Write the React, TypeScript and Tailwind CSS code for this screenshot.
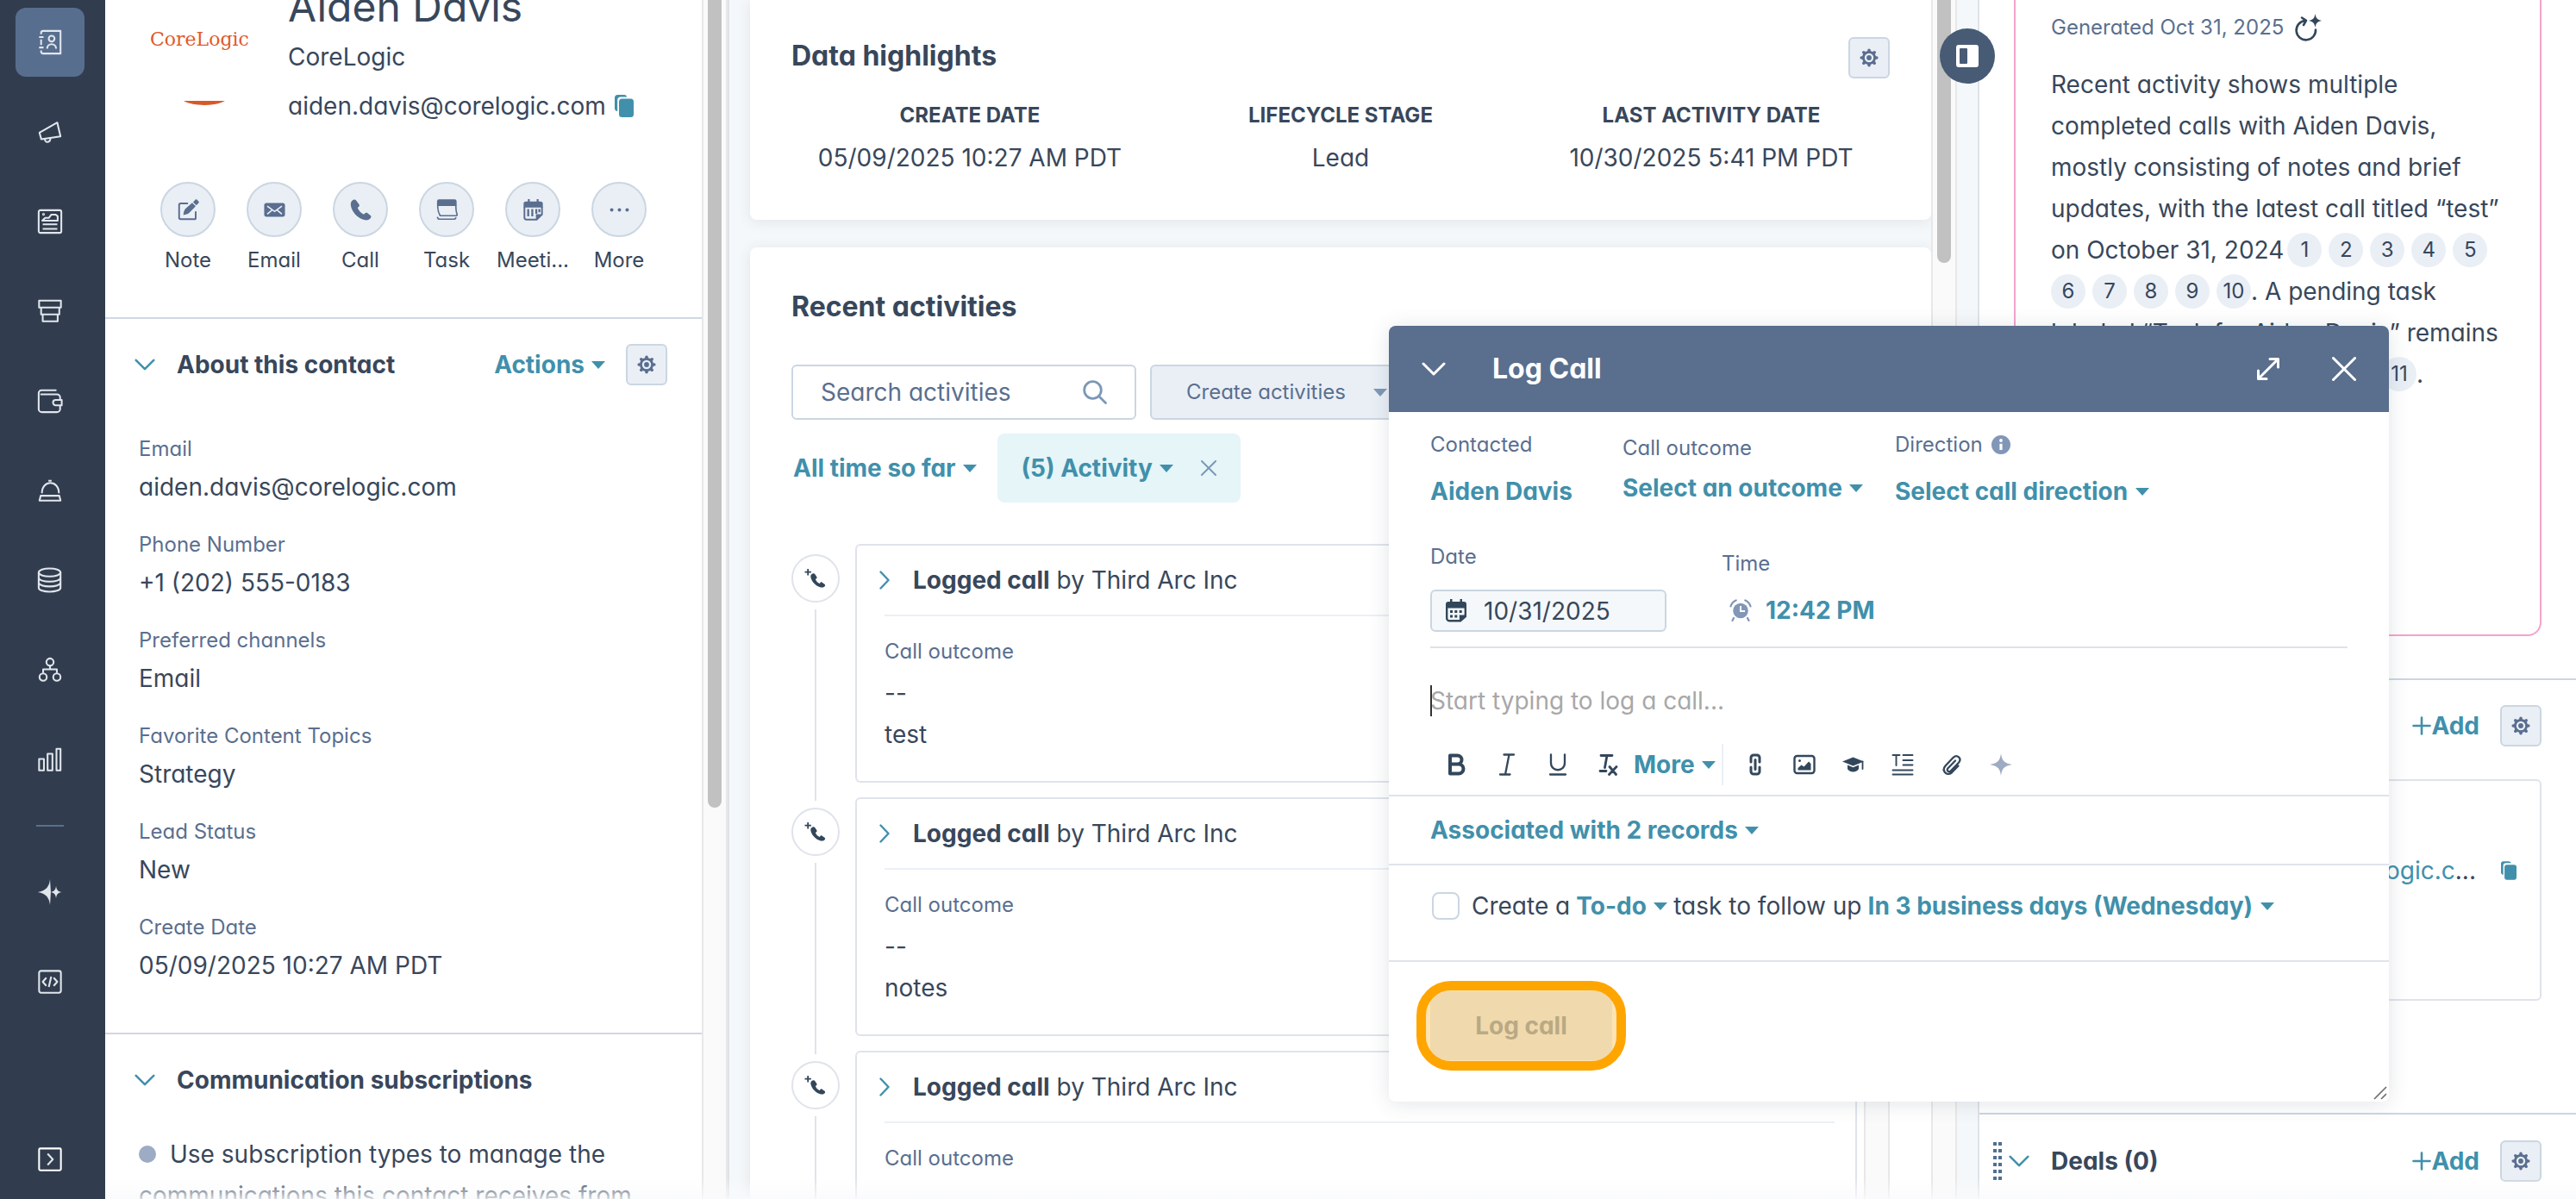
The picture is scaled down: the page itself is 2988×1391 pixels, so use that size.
import { useState, type ReactNode } from 'react';
import clsx from 'clsx';

interface IconProps {
  className?: string;
}

/* ---------- small shared icons ---------- */

function Caret({ className }: IconProps) {
  return (
    <svg viewBox="0 0 16 9" className={clsx('h-[9px] w-4 shrink-0', className)} fill="currentColor" aria-hidden="true">
      <path d="M0 0h16L8 9z" />
    </svg>
  );
}

function ChevronDown({ className }: IconProps) {
  return (
    <svg viewBox="0 0 28 16" className={clsx('shrink-0', className)} fill="none" stroke="currentColor" strokeWidth="3" strokeLinecap="round" strokeLinejoin="round" aria-hidden="true">
      <path d="M2 2l12 12L26 2" />
    </svg>
  );
}

function ChevronRight({ className }: IconProps) {
  return (
    <svg viewBox="0 0 12 22" className={clsx('shrink-0', className)} fill="none" stroke="currentColor" strokeWidth="2.4" strokeLinecap="round" strokeLinejoin="round" aria-hidden="true">
      <path d="M1.5 1.5L10.5 11l-9 9.5" />
    </svg>
  );
}

function Cross({ className }: IconProps) {
  return (
    <svg viewBox="0 0 28 28" className={clsx('shrink-0', className)} fill="none" stroke="currentColor" strokeWidth="3" strokeLinecap="round" aria-hidden="true">
      <path d="M1.5 1.5l25 25M26.5 1.5l-25 25" />
    </svg>
  );
}

function Copy({ className }: IconProps) {
  return (
    <svg viewBox="0 0 22 26" className={clsx('shrink-0', className)} fill="currentColor" aria-hidden="true">
      <path d="M0 3.5A3.5 3.5 0 013.500 0H11a3.500 3.500 0 013.300 2.400H7A3.800 3.800 0 003.200 6.200V19A3.500 3.500 0 010 16z" />
      <rect x="5" y="4.600" width="17" height="21.400" rx="3.500" />
    </svg>
  );
}

function Gear({ className }: IconProps) {
  return (
    <svg viewBox="0 0 22 22" className={clsx('h-[22px] w-[22px]', className)} fill="none" stroke="currentColor" aria-hidden="true">
      <circle cx="11" cy="11" r="6.600" strokeWidth="2.800" />
      <circle cx="11" cy="11" r="2.900" fill="currentColor" stroke="none" />
      <g strokeWidth="3.600" strokeLinecap="round">
        <path d="M11 2.200v1.400M11 18.400v1.400M2.200 11h1.400M18.400 11h1.400M4.800 4.800l.9.9M16.300 16.300l.9.9M4.800 17.200l.9-.9M16.300 5.700l.9-.9" />
      </g>
    </svg>
  );
}

function GearButton({ label }: { label: string }) {
  return (
    <button
      type="button"
      aria-label={label}
      className="flex h-12 w-12 shrink-0 items-center justify-center rounded-md border-2 border-[#cbd6e2] bg-[#eaeff6] text-[#5a6e8f]"
    >
      <Gear />
    </button>
  );
}

/* Native select that is as wide as its current text, with our own caret */
function InlineSelect({ id, label, value }: { id: string; label?: string; value: string }) {
  return (
    <span className="inline-flex items-center gap-2 font-bold text-[#4190ab]">
      <select id={id} aria-label={label} className="appearance-none bg-transparent text-[28px] leading-[48px] font-bold outline-none">
        <option>{value}</option>
      </select>
      <Caret />
    </span>
  );
}

function MenuButton({ children, className }: { children: ReactNode; className?: string }) {
  return (
    <button type="button" aria-haspopup="menu" className={clsx('flex items-center gap-2 font-bold whitespace-nowrap text-[#4190ab]', className)}>
      {children}
      <Caret />
    </button>
  );
}

function ScrollTrack({ children }: { children?: ReactNode }) {
  return <div className="flex w-[30px] shrink-0 justify-center border-x-2 border-[#e8e8e8] bg-[#fafafa]">{children}</div>;
}

/* ---------- navigation rail ---------- */

const NAV_ICONS: { label: string; icon: ReactNode }[] = [
  {
    label: 'Contacts',
    icon: (
      <>
        <path d="M5 6V4.500A2.500 2.500 0 017 2h22v28H7a2.500 2.500 0 01-2-2.500V26M5 12.500v7M2.500 9.500h5.500M2.500 22.500h5.500" />
        <circle cx="18" cy="11.500" r="3.600" />
        <path d="M12.500 24c0-7.500 11-7.500 11 0" />
      </>
    ),
  },
  {
    label: 'Marketing',
    icon: (
      <>
        <path d="M25 4.500L3 17l2.200 8L29 21.500z" />
        <path d="M9.500 24.500c0 5.500 7 5.500 7-1" />
      </>
    ),
  },
  {
    label: 'Content',
    icon: (
      <>
        <rect x="2" y="2" width="28" height="28" rx="2" />
        <path d="M7 19.500h18M7 25h18M6.500 15h19v-5.500l-2.500-2h-5.500l-3 4H10z" />
        <circle cx="8" cy="7" r=".6" />
      </>
    ),
  },
  {
    label: 'Commerce',
    icon: <path d="M2.500 3h27v8.500h-27zM5 11.500h22.500v8.500H5zM7 20h18.500v8.500H7z" />,
  },
  {
    label: 'Wallet',
    icon: (
      <>
        <path d="M24 3H5.500A3.500 3.500 0 002 6.500V26a4 4 0 004 4h18.500a4 4 0 004-4v-4.500M28.500 15v-3a4 4 0 00-4-4H4" />
        <path d="M23 15h7.500v6.500H23a3.200 3.200 0 010-6.500z" />
      </>
    ),
  },
  {
    label: 'Service',
    icon: (
      <>
        <path d="M6 19.500C6 2.500 27 2.500 27 19.500" />
        <path d="M4.500 22.500h23l1.500 6H3zM14 4h4" />
      </>
    ),
  },
  {
    label: 'Data',
    icon: (
      <>
        <ellipse cx="15.500" cy="6.500" rx="13.500" ry="5" />
        <path d="M2 6.500v19c0 6.500 27 6.500 27 0v-19M2 13c0 6.500 27 6.500 27 0M2 19c0 6.500 27 6.500 27 0" />
      </>
    ),
  },
  {
    label: 'Workflows',
    icon: (
      <>
        <circle cx="16" cy="6.500" r="4.500" />
        <circle cx="7.500" cy="25" r="4.500" />
        <circle cx="24.500" cy="25" r="4.500" />
        <path d="M16 11v4.500M7.500 20v-4.500h17V20" />
      </>
    ),
  },
  {
    label: 'Reporting',
    icon: <path d="M2.500 15.500h6v14h-6zM13 9h6v20.500h-6zM24 3h5v26.500h-5z" />,
  },
];

function NavButton({ label, active, children }: { label: string; active?: boolean; children: ReactNode }) {
  return (
    <button
      type="button"
      aria-label={label}
      className={clsx('flex h-20 w-20 shrink-0 items-center justify-center rounded-xl text-[#e1e6ed]', active && 'bg-[#586e8e]')}
    >
      <svg viewBox="0 0 32 32" className="h-[30px] w-[30px]" fill="none" stroke="currentColor" strokeWidth="2.200" strokeLinejoin="round" aria-hidden="true">
        {children}
      </svg>
    </button>
  );
}

function NavRail() {
  return (
    <nav className="flex w-[122px] shrink-0 flex-col gap-6 bg-[#313d4e] pt-[9px] pb-1.5 pl-[18px]">
      {NAV_ICONS.map((n, i) => (
        <NavButton key={n.label} label={n.label} active={i === 0}>
          {n.icon}
        </NavButton>
      ))}
      <div className="my-3 ml-6 h-0.5 w-8 bg-[#5a6f8f]" />
      <NavButton label="Breeze">
        <path d="M16 0c-.8 9-5 14.500-15 16 10 1.500 14.200 7 15 16z" fill="currentColor" stroke="none" />
        <path d="M16 0l1 16-1 16z" fill="currentColor" stroke="none" />
        <path d="M23.500 8.500c.6 4.800 2.500 6.900 7 7.500-4.500.6-6.400 2.700-7 7.500-.6-4.800-2.500-6.900-7-7.500 4.500-.6 6.400-2.700 7-7.500z" fill="currentColor" stroke="none" />
      </NavButton>
      <NavButton label="Development">
        <rect x="2.500" y="2.500" width="27" height="27" rx="2.500" />
        <path d="M11.500 11l-4.500 5 4.500 5M20.500 11l4.500 5-4.500 5M17.500 9.500l-3 13" />
      </NavButton>
      <div className="mt-auto">
        <NavButton label="Expand navigation">
          <rect x="2.500" y="2.500" width="27" height="27" rx="1.500" stroke="#fff" />
          <path d="M13 9l6.500 7-6.500 7" />
        </NavButton>
      </div>
    </nav>
  );
}

/* ---------- left panel ---------- */

const QUICK_ACTIONS: { label: string; icon: ReactNode }[] = [
  {
    label: 'Note',
    icon: (
      <>
        <path d="M13.500 5.500H4A2 2 0 002 7.500v16.500a2 2 0 002 2h18.500a1 1 0 001-1v-9" fill="none" stroke="currentColor" strokeWidth="2.200" />
        <path d="M23 .8c.7-.6 1.500-.6 2.200.1l2 2c.7.7.7 1.500.1 2.200l-3 3-4.200-4.300zM19 4.700l4.500 4.500L15 18c-1.800 1.500-4.500 2.300-7.500 2.600.2-3.500 1-6.300 2.900-8.300z" />
      </>
    ),
  },
  {
    label: 'Email',
    icon: (
      <>
        <rect x=".5" y="5" width="27" height="18" rx="3" />
        <path d="M4.500 9l9.500 7 9.500-7M4.500 19.500l6-5M23.500 19.500l-6-5" fill="none" stroke="#eaeff6" strokeWidth="1.800" />
      </>
    ),
  },
  {
    label: 'Call',
    icon: (
      <path d="M4.500.8C1.800 2 .5 4.500 1 8.500c1.500 9 10 17.300 18.500 18.700 3.800.6 6.500-.9 7.700-3.500.4-.9.1-1.700-.6-2.400l-4.200-3.300c-.9-.7-1.900-.6-2.700.1l-1.900 1.700c-3.800-1.700-6.600-4.900-8-8.500l1.700-1.500c.8-.8.9-1.700.4-2.700L7.900 1.700C7 .4 5.700.2 4.500.8z" />
    ),
  },
  {
    label: 'Task',
    icon: (
      <>
        <path d="M1 3a2.600 2.600 0 012.600-2.600h20.300A2.600 2.600 0 0126.500 3v6H1z" />
        <path d="M2 8.500v2.500c.2 4 1 7.500 3.200 10.500h20.500c1.200 0 1.800-.8 1.300-2-1.200-3-1.500-6.500-1.500-11M1.500 23c.3 2 1.200 3 2.800 3h19c1.300 0 2.200-.8 2.200-2.500" fill="none" stroke="currentColor" strokeWidth="1.800" />
      </>
    ),
  },
  {
    label: 'Meeti...',
    icon: (
      <>
        <path d="M7 0h2.500v3h9V0H21v3h2.500a3 3 0 013 3v5H1.500V6a3 3 0 013-3H7z" />
        <path d="M2.600 10v14a2.500 2.500 0 002.400 2.600h13.500l6.900-6.600V10" fill="none" stroke="currentColor" strokeWidth="2.200" />
        <path d="M7.500 13v9.500M12.800 13v9.500M18 13v6M22 13v4" stroke="currentColor" strokeWidth="2.600" />
        <path d="M17.500 27v-7.500h8.500z" />
      </>
    ),
  },
  {
    label: 'More',
    icon: (
      <>
        <circle cx="4" cy="14" r="2.200" />
        <circle cx="14" cy="14" r="2.200" />
        <circle cx="24" cy="14" r="2.200" />
      </>
    ),
  },
];

const FIELDS = [
  { label: 'Email', value: 'aiden.davis@corelogic.com' },
  { label: 'Phone Number', value: '+1 (202) 555-0183' },
  { label: 'Preferred channels', value: 'Email' },
  { label: 'Favorite Content Topics', value: 'Strategy' },
  { label: 'Lead Status', value: 'New' },
  { label: 'Create Date', value: '05/09/2025 10:27 AM PDT' },
];

function ContactPanel() {
  return (
    <div className="flex w-[724px] shrink-0 border-r-2 border-[#dfe3e8]">
      <div className="min-w-0 flex-1 bg-white">
        <div className="border-b-2 border-[#cfd7e3] pb-12">
          <div className="-mt-[22px] flex pl-[52px]">
            <div className="flex w-40 shrink-0 flex-col pt-14">
              <span className="font-['DejaVu_Serif',serif] text-[22px] leading-6 text-[#e2592b]">CoreLogic</span>
              <svg viewBox="0 0 48 5" className="mt-[59px] ml-[39px] h-[5px] w-12" aria-hidden="true">
                <path d="M0 0h48C36 6.500 12 6.500 0 0z" fill="#d9582b" />
              </svg>
            </div>
            <div>
              <h1 className="text-5xl leading-[60px]">Aiden Davis</h1>
              <p className="leading-[57px]">CoreLogic</p>
              <p className="flex items-center gap-2.5 leading-[56px]">
                aiden.davis@corelogic.com
                <button type="button" aria-label="Copy email" className="text-[#4190ab]">
                  <Copy className="h-[26px] w-[22px]" />
                </button>
              </p>
            </div>
          </div>
          <div className="mt-[60px] flex pl-[46px]">
            {QUICK_ACTIONS.map((a) => (
              <button key={a.label} type="button" className="flex w-[100px] flex-col items-center gap-[9px] text-2xl leading-9">
                <span className="flex h-16 w-16 items-center justify-center rounded-full border-2 border-[#cbd6e2] bg-[#eaeff6] text-[#5a6e8f]">
                  <svg viewBox="0 0 28 28" className="h-[25px] w-[25px]" fill="currentColor" aria-hidden="true">
                    {a.icon}
                  </svg>
                </span>
                {a.label}
              </button>
            ))}
          </div>
        </div>

        <section className="border-b-2 border-[#cfd7e3] pt-[29px] pb-[54px]">
          <div className="flex h-12 items-center pr-10 pl-[34px]">
            <ChevronDown className="h-[14px] w-6 text-[#4190ab]" />
            <h2 className="ml-[25px] flex-1 font-bold">About this contact</h2>
            <MenuButton className="mr-6">Actions</MenuButton>
            <GearButton label="About settings" />
          </div>
          <dl className="mt-[54px] flex flex-col gap-[23px] px-[39px]">
            {FIELDS.map((f) => (
              <div key={f.label}>
                <dt className="text-2xl leading-10 text-[#5a6f8f]">{f.label}</dt>
                <dd className="leading-[48px]">{f.value}</dd>
              </div>
            ))}
          </dl>
        </section>

        <section className="pt-[29px]">
          <div className="flex h-12 items-center pr-10 pl-[34px]">
            <ChevronDown className="h-[14px] w-6 text-[#4190ab]" />
            <h2 className="ml-[25px] flex-1 font-bold">Communication subscriptions</h2>
          </div>
          <p className="mt-[38px] px-[39px] leading-[48px]">
            <span className="mr-4 inline-block h-5 w-5 rounded-full bg-[#9dabc4]" />
            Use subscription types to manage the communications this contact receives from
          </p>
        </section>
      </div>
      <ScrollTrack>
        <div className="h-[937px] w-4 rounded-b-full bg-[#c1c1c1]" />
      </ScrollTrack>
    </div>
  );
}

/* ---------- middle column ---------- */

const HIGHLIGHTS = [
  { label: 'CREATE DATE', value: '05/09/2025 10:27 AM PDT' },
  { label: 'LIFECYCLE STAGE', value: 'Lead' },
  { label: 'LAST ACTIVITY DATE', value: '10/30/2025 5:41 PM PDT' },
];

const CALLS = [
  { id: 1, note: 'test' },
  { id: 2, note: 'notes' },
  { id: 3, note: '' },
];

function LoggedCall({ note }: { note: string }) {
  return (
    <li className="flex gap-[18px]">
      <div className="flex w-14 shrink-0 flex-col items-center pt-3">
        <span className="flex h-14 w-14 shrink-0 items-center justify-center rounded-full border-2 border-[#dfe3eb]">
          <svg viewBox="0 0 26 22" className="h-[22px] w-[26px]" fill="#33475b" aria-hidden="true">
            <path d="M4.200 0v7.400M.5 3.700h7.400" stroke="#33475b" strokeWidth="1.800" />
            <path d="M9.500 5.500c-1.800.7-2.600 2.200-2 4.700 1.200 5 6.500 10 11.500 11.200 2.600.5 4.200-.4 5-2 .3-.7.100-1.200-.5-1.700l-2.900-2c-.6-.5-1.300-.4-1.800.1l-1.200 1.200c-2.300-1.100-3.900-2.800-4.700-5l1.300-1c.5-.5.6-1.100.2-1.800l-2.200-3.300c-.6-.8-1.600-.8-2.700-.4z" />
          </svg>
        </span>
        <span className="mt-2 -mb-1 w-0.5 flex-1 bg-[#dfe3eb]" />
      </div>
      <article className="mb-[17px] min-w-0 flex-1 rounded-md border-2 border-[#dfe3eb] bg-white pt-4 pb-[30px]">
        <div className="flex items-center pl-[26px] leading-[48px]">
          <ChevronRight className="h-[22px] w-3 text-[#4190ab]" />
          <p className="ml-[27px]">
            <strong className="font-bold">Logged call</strong> by Third Arc Inc
          </p>
        </div>
        <div className="mt-4 mr-6 ml-8 border-t-2 border-[#eaf0f6] pt-[23px]">
          <p className="text-2xl leading-9 text-[#5a6f8f]">Call outcome</p>
          <p className="mt-1.5 leading-[48px]">--</p>
          <p className="h-12 leading-[48px]">{note}</p>
        </div>
      </article>
    </li>
  );
}

function ActivityColumn() {
  return (
    <main className="flex min-w-0 flex-1 border-r-2 border-[#dfe3e8] bg-[#f5f8fa] pl-6">
      <div className="min-w-0 flex-1">
        <section className="rounded-b-lg bg-white pt-[43px] pb-12 shadow-[0_2px_16px_rgba(45,62,80,0.1)]">
          <div className="flex items-start justify-between px-12">
            <h2 className="text-[32px] leading-[44px] font-bold">Data highlights</h2>
            <GearButton label="Highlight settings" />
          </div>
          <dl className="mt-[25px] grid grid-cols-3 px-10 text-center">
            {HIGHLIGHTS.map((h) => (
              <div key={h.label}>
                <dt className="text-2xl leading-9 font-bold">{h.label}</dt>
                <dd className="mt-[7px] leading-[48px]">{h.value}</dd>
              </div>
            ))}
          </dl>
        </section>

        <section className="mt-8 rounded-t-lg bg-white px-12 pt-[47px] shadow-[0_2px_16px_rgba(45,62,80,0.1)]">
          <h2 className="text-[32px] leading-[44px] font-bold">Recent activities</h2>
          <div className="mt-[45px] flex gap-4">
            <label className="flex h-16 w-[400px] items-center rounded-md border-2 border-[#cbd6e2] pr-8 pl-8">
              <input
                type="search"
                aria-label="Search activities"
                placeholder="Search activities"
                className="min-w-0 flex-1 bg-transparent outline-none placeholder:text-[#5a6f8f]"
              />
              <svg viewBox="0 0 28 28" className="h-7 w-7 text-[#7c98b6]" fill="none" stroke="currentColor" strokeWidth="2.800" strokeLinecap="round" aria-hidden="true">
                <circle cx="11.500" cy="11.500" r="9.800" />
                <path d="M18.500 18.500l8 8" />
              </svg>
            </label>
            <button
              type="button"
              className="flex h-16 items-center gap-8 rounded-md border-2 border-[#cbd6e2] bg-[#eaeff6] px-10 text-2xl whitespace-nowrap text-[#5a6f8f]"
            >
              Create activities
              <Caret className="text-[#7c98b6]" />
            </button>
          </div>
          <div className="mt-4 flex h-20 items-center gap-6 pl-0.5">
            <MenuButton>All time so far</MenuButton>
            <div className="flex h-20 items-center gap-8 rounded-lg bg-[#e5f5f8] px-7">
              <MenuButton>(5) Activity</MenuButton>
              <button type="button" aria-label="Clear activity filter" className="text-[#7c98b6]">
                <Cross className="h-[18px] w-[18px]" />
              </button>
            </div>
          </div>
          <div className="mt-12 flex">
            <ul className="mr-2 min-w-0 flex-1">
              {CALLS.map((c) => (
                <LoggedCall key={c.id} note={c.note} />
              ))}
            </ul>
            <ScrollTrack />
          </div>
        </section>
      </div>
      <div className="mr-6 flex">
        <ScrollTrack>
          <div className="h-[305px] w-4 rounded-b-full bg-[#c1c1c1]" />
        </ScrollTrack>
      </div>
    </main>
  );
}

/* ---------- right panel ---------- */

function Cite({ n }: { n: number }) {
  return (
    <a href={`#source-${n}`} className="flex h-10 w-10 shrink-0 items-center justify-center rounded-full bg-[#eaeff6] text-2xl">
      {n}
    </a>
  );
}

function AddButton() {
  return (
    <button type="button" className="flex items-center font-bold text-[#4190ab]">
      <svg viewBox="0 0 22 22" className="h-[22px] w-[22px]" stroke="currentColor" strokeWidth="2.600" strokeLinecap="round" aria-hidden="true">
        <path d="M11 1.500v19M1.500 11h19" />
      </svg>
      Add
    </button>
  );
}

function SummaryPanel() {
  return (
    <aside className="w-[692px] shrink-0 bg-white">
      <section className="mr-10 ml-10 rounded-b-2xl border-2 border-t-0 border-[#f3a4cb] pt-[14px] pb-[278px] pl-[41px]">
        <p className="flex items-center gap-3 text-2xl leading-9 text-[#5a6f8f]">
          Generated Oct 31, 2025
          <button type="button" aria-label="Regenerate summary" className="text-[#33475b]">
            <svg viewBox="0 0 32 32" className="h-8 w-8" fill="none" stroke="currentColor" strokeWidth="2.600" strokeLinecap="round" strokeLinejoin="round" aria-hidden="true">
              <path d="M12.500 8A11.200 11.200 0 1025 18.500M9 4.500l5 3.300L11 13" />
              <path d="M24.500 0c.9 5 2.300 6.800 7.500 8-5.200 1.200-6.600 3-7.500 8-.9-5-2.300-6.800-7.500-8 5.200-1.200 6.600-3 7.500-8z" fill="currentColor" stroke="none" />
            </svg>
          </button>
        </p>
        <p className="mt-6 leading-[48px] whitespace-nowrap">
          <span className="block">Recent activity shows multiple</span>
          <span className="block">completed calls with Aiden Davis,</span>
          <span className="block">mostly consisting of notes and brief</span>
          <span className="block">updates, with the latest call titled “test”</span>
          <span className="flex items-center gap-1">
            on October 31, 2024
            <span className="flex gap-2">
              {[1, 2, 3, 4, 5].map((n) => (
                <Cite key={n} n={n} />
              ))}
            </span>
          </span>
          <span className="flex items-center">
            <span className="flex gap-2">
              {[6, 7, 8, 9, 10].map((n) => (
                <Cite key={n} n={n} />
              ))}
            </span>
            . A pending task
          </span>
          <span className="block">labeled “Task for Aiden Davis” remains</span>
          <span className="flex items-center pl-96">
            <Cite n={11} />.
          </span>
        </p>
      </section>

      <section className="mt-[49px] border-t-2 border-[#cbd6e2] pt-[29px] pr-10 pl-10">
        <div className="flex items-center justify-end gap-6">
          <AddButton />
          <GearButton label="Association settings" />
        </div>
        <div className="mt-[38px] flex items-center justify-end gap-[29px] rounded-md border-2 border-[#dfe3eb] pt-20 pr-[27px] pb-[125px] leading-[48px]">
          <span>
            <a href="#email" className="text-[#4190ab]">
              aiden.davis@corelogic.c
            </a>
            ...
          </span>
          <button type="button" aria-label="Copy email" className="text-[#4190ab]">
            <Copy className="h-[22px] w-[18px]" />
          </button>
        </div>
      </section>

      <section className="mt-[130px] flex items-center border-t-2 border-[#cbd6e2] pt-[30px] pr-10 pl-4">
        <svg viewBox="0 0 10 44" className="h-11 w-2.5" fill="#516f90" aria-hidden="true">
          {[0, 8, 16, 24, 32, 40].map((y) => (
            <g key={y}>
              <rect x="0" y={y} width="4" height="4" />
              <rect x="6" y={y} width="4" height="4" />
            </g>
          ))}
        </svg>
        <ChevronDown className="ml-2 h-[14px] w-6 text-[#4190ab]" />
        <h2 className="ml-[25px] flex-1 font-bold">Deals (0)</h2>
        <div className="flex items-center gap-6">
          <AddButton />
          <GearButton label="Deal settings" />
        </div>
      </section>
    </aside>
  );
}

/* ---------- log call window ---------- */

const FORMAT_TOOLS: { label: string; icon: ReactNode }[] = [
  { label: 'Bold', icon: <path d="M6 2.500h8.500a5 5 0 010 10H6zM6 12.500h10a5.500 5.500 0 010 11H6z" strokeWidth="4" /> },
  { label: 'Italic', icon: <path d="M9.500 1.500H21M5 24.500h11.500M15.500 1.500L11 24.500" /> },
  { label: 'Underline', icon: <path d="M5 1.500V11c0 11 16 11 16 0V1.500M4 24.500h18" /> },
  {
    label: 'Clear formatting',
    icon: <path d="M4 2.500h13M11 2.500L8.500 16.500M3 20.500h7M14 15.500l7.500 9M22 15.500l-8.500 9" strokeWidth="2.800" />,
  },
];

const INSERT_TOOLS: { label: string; icon: ReactNode }[] = [
  {
    label: 'Link',
    icon: <path d="M8 10V5a3 3 0 013-3h4a3 3 0 013 3v5M8 16v5a3 3 0 003 3h4a3 3 0 003-3v-5M13 7.500v11" strokeWidth="3" />,
  },
  {
    label: 'Image',
    icon: (
      <>
        <rect x="1.500" y="3" width="23" height="20" rx="3" strokeWidth="2.400" />
        <path d="M5.500 19.500v-2.500l4-3.500 3 2L18 9.500l2.500 2.500v7.500z" fill="currentColor" stroke="none" />
        <circle cx="7.500" cy="8.500" r="1.500" fill="currentColor" stroke="none" />
      </>
    ),
  },
  {
    label: 'Knowledge base',
    icon: (
      <>
        <path d="M0 9.500L12.500 4.500 25 9.500l-12.500 5z" fill="currentColor" stroke="none" />
        <path d="M6 13.500l6.500 2.800 6.500-2.800v4.500c-2 4.600-11 4.600-13 0z" fill="currentColor" stroke="none" />
        <path d="M23.500 9.500v8.500M12.500 9.500l4 1" strokeWidth="1.800" />
      </>
    ),
  },
  {
    label: 'Snippets',
    icon: <path d="M1.500 2h8M5.500 2v12M13.500 2h11M13.500 8h11M13.500 13.500h11M1.500 19.500h23M1.500 24.500h23" strokeWidth="1.900" />,
  },
  {
    label: 'Attachment',
    icon: (
      <path d="M17 8.500l-8.500 8.800c-2.300 2.600 1 5.300 3.300 3L21 10.700c4-4.800-1.800-10-6.300-5.900L5.500 14.500C.8 20.200 7 27 12.700 22.500l7.800-8" strokeWidth="2.300" />
    ),
  },
  {
    label: 'Assistant',
    icon: <path d="M13 0c1 8 3.500 11.500 13 13-9.500 1.500-12 5-13 13-1-8-3.500-11.500-13-13 9.500-1.500 12-5 13-13z" fill="#9eabc4" stroke="none" />,
  },
];

function ToolButton({ label, width, children }: { label: string; width: string; children: ReactNode }) {
  return (
    <button type="button" aria-label={label} className={clsx('flex h-12 items-center justify-center text-[#33475b]', width)}>
      <svg viewBox="0 0 26 26" className="h-[26px] w-[26px]" fill="none" stroke="currentColor" strokeWidth="2.300" strokeLinecap="round" strokeLinejoin="round" aria-hidden="true">
        {children}
      </svg>
    </button>
  );
}

function LogCallWindow() {
  const [followUp, setFollowUp] = useState(false);

  return (
    <div
      role="dialog"
      aria-label="Log Call"
      className="absolute right-[217px] bottom-[113px] w-[1160px] rounded-lg bg-white shadow-[0_2px_24px_rgba(45,62,80,0.14)]"
    >
      <header className="flex h-[100px] items-center rounded-t-lg bg-[#5a6e8d] pr-[38px] pl-[38px] text-white">
        <button type="button" aria-label="Minimize">
          <ChevronDown className="h-4 w-7" />
        </button>
        <h2 className="ml-[54px] flex-1 text-[32px] font-bold">Log Call</h2>
        <button type="button" aria-label="Expand">
          <svg viewBox="0 0 28 28" className="h-7 w-7" fill="none" stroke="currentColor" strokeWidth="3" strokeLinecap="round" strokeLinejoin="round" aria-hidden="true">
            <path d="M2.500 25.500l23-23M16 2.500h9.500V12M12 25.500H2.500V16" />
          </svg>
        </button>
        <button type="button" aria-label="Close" className="ml-[60px]">
          <Cross className="h-7 w-7" />
        </button>
      </header>

      <div className="mx-12 border-b-2 border-[#dfe3e8] pb-[17px]">
        <div className="flex">
          <div className="w-[223px] pt-5">
            <p className="text-2xl leading-9 text-[#5a6f8f]">Contacted</p>
            <a href="#contact" className="mt-3 block leading-[48px] font-bold text-[#4190ab]">
              Aiden Davis
            </a>
          </div>
          <div className="w-[316px] pt-6">
            <label htmlFor="outcome" className="mb-1 block text-2xl leading-9 text-[#5a6f8f]">
              Call outcome
            </label>
            <InlineSelect id="outcome" value="Select an outcome" />
          </div>
          <div className="pt-5">
            <div className="mb-3 flex items-center gap-2.5 text-2xl leading-9 text-[#5a6f8f]">
              <label htmlFor="direction">Direction</label>
              <svg viewBox="0 0 22 22" className="h-[22px] w-[22px] text-[#8297b7]" aria-hidden="true">
                <circle cx="11" cy="11" r="11" fill="currentColor" />
                <circle cx="11" cy="6" r="1.900" fill="#fff" />
                <path d="M11 9.800v7.200" stroke="#fff" strokeWidth="3.200" />
              </svg>
            </div>
            <InlineSelect id="direction" value="Select call direction" />
          </div>
        </div>
        <div className="mt-[34px] flex">
          <div className="w-[338px]">
            <label htmlFor="date" className="block text-2xl leading-9 text-[#5a6f8f]">
              Date
            </label>
            <div className="mt-5 flex h-[49px] w-[274px] items-center gap-5 rounded-md border-2 border-[#cbd6e2] bg-[#f5f8fa] pl-4">
              <svg viewBox="0 0 24 27" className="h-[27px] w-6 shrink-0" fill="#33475b" aria-hidden="true">
                <path d="M5 0h2.500v3h9V0H19v3h2a3 3 0 013 3v4.500H0V6a3 3 0 013-3h2z" />
                <path d="M1.200 10v12A3 3 0 004 25.200h13l5.800-5V10" fill="none" stroke="#33475b" strokeWidth="2.400" />
                <path d="M5 13h3v3H5zM10.300 13h3v3h-3zM15.700 13h3v3h-3zM5 18.500h3v3H5zM10.300 18.500h3v3h-3zM15.700 18.500H24L16 26z" />
              </svg>
              <input id="date" defaultValue="10/31/2025" className="min-w-0 flex-1 bg-transparent outline-none" />
            </div>
          </div>
          <div className="pt-2">
            <label htmlFor="time" className="block text-2xl leading-9 text-[#5a6f8f]">
              Time
            </label>
            <div className="mt-3 flex items-center gap-4 pl-[9px]">
              <svg viewBox="0 0 26 26" className="h-[26px] w-[26px]" fill="#8297b7" aria-hidden="true">
                <circle cx="13" cy="13.500" r="8.800" />
                <path d="M1.500 8.500c1-3.500 3-5.600 6.200-7M24.500 8.500c-1-3.500-3-5.600-6.200-7M5 22l-1.500 3M21 22l1.500 3" stroke="#8297b7" strokeWidth="2.200" strokeLinecap="round" fill="none" />
                <path d="M13 8v6h5" stroke="#fff" strokeWidth="2" fill="none" />
              </svg>
              <input id="time" defaultValue="12:42 PM" className="h-12 w-40 bg-transparent font-bold text-[#4190ab] outline-none" />
            </div>
          </div>
        </div>
      </div>

      <div className="relative mx-12 mt-[37px]">
        <textarea
          aria-label="Call notes"
          rows={1}
          placeholder="Start typing to log a call..."
          className="block w-full resize-none bg-transparent leading-[48px] outline-none placeholder:text-[#a8a8a8]"
        />
        <span className="absolute top-1.5 left-0 h-9 w-0.5 bg-[#333]" />
      </div>

      <div className="mt-[26px] flex h-12 items-center pl-12">
        {FORMAT_TOOLS.map((t) => (
          <ToolButton key={t.label} label={t.label} width="w-[59px]">
            {t.icon}
          </ToolButton>
        ))}
        <div className="w-[102px]">
          <MenuButton>More</MenuButton>
        </div>
        <span className="mr-2 h-12 w-0.5 bg-[#eaeff6]" />
        {INSERT_TOOLS.map((t) => (
          <ToolButton key={t.label} label={t.label} width="w-[57px]">
            {t.icon}
          </ToolButton>
        ))}
      </div>

      <div className="mt-[11px] flex h-[82px] items-center border-y-2 border-[#dfe3eb] pl-12">
        <MenuButton>Associated with 2 records</MenuButton>
      </div>

      <div className="flex items-center border-b-2 border-[#dfe3eb] pt-[23px] pb-[39px] pl-[50px] leading-[48px]">
        <input
          id="follow-up"
          type="checkbox"
          checked={followUp}
          onChange={(e) => setFollowUp(e.target.checked)}
          className="h-8 w-8 shrink-0 appearance-none rounded-lg border-2 border-[#cbd6e2] bg-white checked:bg-[#4190ab]"
        />
        <div className="ml-[14px] flex gap-[7px] whitespace-nowrap">
          <label htmlFor="follow-up">Create a</label>
          <InlineSelect id="task-type" label="Task type" value="To-do" />
          <span>task to follow up</span>
          <InlineSelect id="due" label="Due date" value="In 3 business days (Wednesday)" />
        </div>
      </div>

      <footer className="flex pt-[34px] pb-12 pl-12">
        <div className="relative">
          <button type="button" disabled className="h-20 w-[211px] rounded-md bg-[#eaf0f6] font-bold text-[#9babbf]">
            Log call
          </button>
          <span className="pointer-events-none absolute -inset-x-4 -inset-y-3 rounded-[40px] border-[11px] border-[#ffa500] bg-[#ffa500]/30 bg-clip-padding" />
        </div>
      </footer>
      <svg viewBox="0 0 16 16" className="absolute right-0.5 bottom-0.5 h-4 w-4" stroke="#6b6b6b" strokeWidth="1.600" aria-hidden="true">
        <path d="M1 15L15 1M9 15l6-6" />
      </svg>
    </div>
  );
}

export default function App() {
  return (
    <div className="relative flex h-screen overflow-hidden bg-white font-['Inter','Open_Sans',sans-serif] text-[28px] text-[#38475b] [font-feature-settings:'cv11']">
      <NavRail />
      <ContactPanel />
      <ActivityColumn />
      <SummaryPanel />

      <button
        type="button"
        aria-label="Toggle sidebar"
        className="absolute top-[33px] right-[674px] flex h-16 w-16 items-center justify-center rounded-full bg-[#475b75] text-white"
      >
        <svg viewBox="0 0 26 26" className="h-[26px] w-[26px]" aria-hidden="true">
          <rect width="26" height="26" rx="3" fill="currentColor" />
          <rect x="4" y="4" width="9" height="18" rx="1" fill="#475b75" />
        </svg>
      </button>

      <div className="pointer-events-none absolute right-0 bottom-0 left-[122px] h-6 bg-gradient-to-b from-transparent to-[#f9fafc]/80" />
      <LogCallWindow />
    </div>
  );
}
